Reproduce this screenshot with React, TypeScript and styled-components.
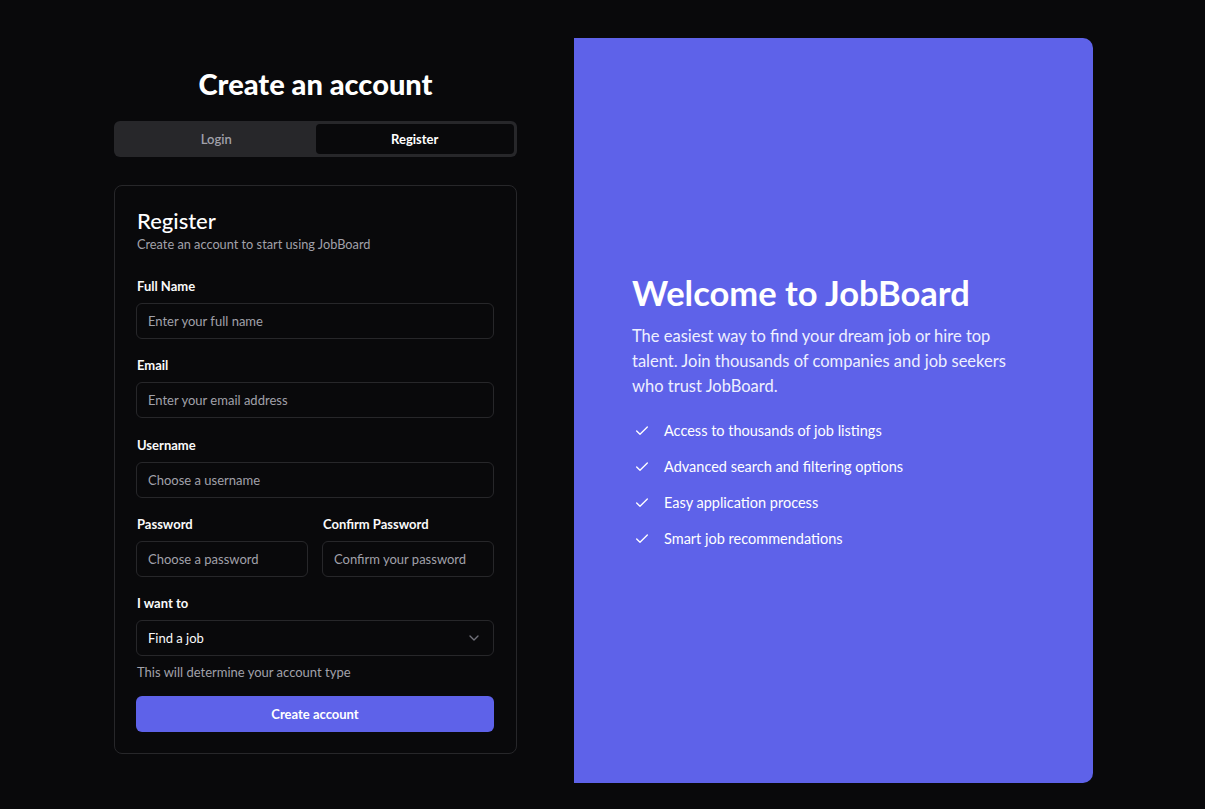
import React from "react";
import styled, { createGlobalStyle } from "styled-components";
import { Check, ChevronDown } from "lucide-react";

const Global = createGlobalStyle`
  html, body { margin: 0; padding: 0; background: #09090b; }
  body { font-family: "Segoe UI", Lato, "Noto Sans", sans-serif; color: #fafafa; }
  * { box-sizing: border-box; }
`;

const Page = styled.div`
  width: 1205px;
  height: 809px;
  background: #09090b;
  display: flex;
  justify-content: center;
  align-items: stretch;
  padding: 38px 0 26px 2px;
  gap: 57px;
`;

const LeftCol = styled.div`
  width: 403px;
  display: flex;
  flex-direction: column;
  padding-top: 29px;
`;

const Title = styled.h1`
  margin: 0;
  text-align: center;
  font-size: 29px;
  line-height: 34px;
  font-weight: 900;
  color: #ffffff;
`;

const Tabs = styled.div`
  margin-top: 20px;
  height: 36px;
  background: #27272a;
  border-radius: 6px;
  padding: 3px;
  display: grid;
  grid-template-columns: 1fr 1fr;
`;

const Tab = styled.div<{ $active?: boolean }>`
  display: flex;
  align-items: center;
  justify-content: center;
  border-radius: 4px;
  font-size: 13px;
  font-weight: ${(p) => (p.$active ? 700 : 600)};
  color: ${(p) => (p.$active ? "#ffffff" : "#a1a1aa")};
  background: ${(p) => (p.$active ? "#09090b" : "transparent")};
`;

const Card = styled.div`
  margin-top: 28px;
  border: 1px solid #27272a;
  border-radius: 8px;
  padding: 22px 22px 21px 21px;
  display: flex;
  flex-direction: column;
`;

const CardTitle = styled.h2`
  margin: 0 0 0 1px;
  font-size: 22px;
  line-height: 26px;
  font-weight: 500;
  color: #ffffff;
`;

const CardSub = styled.p`
  margin: 0 0 0 1px;
  font-size: 12.75px;
  line-height: 20px;
  color: #a1a1aa;
`;

const Form = styled.div`
  margin-top: 22px;
  display: flex;
  flex-direction: column;
  gap: 16.25px;
`;

const Row = styled.div`
  display: grid;
  grid-template-columns: 1fr 1fr;
  gap: 14px;
`;

const Field = styled.div`
  display: flex;
  flex-direction: column;
  gap: 7px;
`;

const Label = styled.label`
  padding-left: 1px;
  font-size: 13px;
  line-height: 20px;
  font-weight: 700;
  color: #fafafa;
`;

const Input = styled.div`
  height: 36px;
  border: 1px solid #27272a;
  border-radius: 6px;
  padding: 0 11px;
  display: flex;
  align-items: center;
  font-size: 13px;
  color: #a1a1aa;
`;

const Select = styled(Input)`
  justify-content: space-between;
  color: #fafafa;
  & svg { color: #71717a; }
`;

const Helper = styled.p`
  margin: 6px 0 0 1px;
  font-size: 13px;
  line-height: 20px;
  color: #a1a1aa;
`;

const Button = styled.button`
  margin-top: 14px;
  height: 36px;
  border: none;
  border-radius: 6px;
  background: #5e62e9;
  color: #ffffff;
  font-family: inherit;
  font-size: 13px;
  font-weight: 700;
`;

const Panel = styled.div`
  width: 519px;
  background: #5e62e9;
  border-radius: 0 10px 10px 0;
  padding: 0 58px;
  display: flex;
  flex-direction: column;
  justify-content: center;
`;

const Welcome = styled.h2`
  margin: 0;
  font-size: 34.5px;
  line-height: 40px;
  font-weight: 700;
  color: #ffffff;
`;

const Lead = styled.p`
  margin: 11px 0 0;
  max-width: 385px;
  font-size: 16.5px;
  line-height: 25px;
  color: #eef0ff;
`;

const List = styled.ul`
  list-style: none;
  margin: 22px 0 0;
  padding: 0;
  display: flex;
  flex-direction: column;
  gap: 16px;
`;

const Item = styled.li`
  display: flex;
  align-items: center;
  gap: 14px;
  font-size: 14.5px;
  line-height: 20px;
  color: #ffffff;
  & svg { margin-left: 2px; flex-shrink: 0; }
`;

const features = [
  "Access to thousands of job listings",
  "Advanced search and filtering options",
  "Easy application process",
  "Smart job recommendations",
];

export default function App() {
  return (
    <>
      <Global />
      <Page>
        <LeftCol>
          <Title>Create an account</Title>
          <Tabs>
            <Tab>Login</Tab>
            <Tab $active>Register</Tab>
          </Tabs>
          <Card>
            <CardTitle>Register</CardTitle>
            <CardSub>Create an account to start using JobBoard</CardSub>
            <Form>
              <Field>
                <Label>Full Name</Label>
                <Input>Enter your full name</Input>
              </Field>
              <Field>
                <Label>Email</Label>
                <Input>Enter your email address</Input>
              </Field>
              <Field>
                <Label>Username</Label>
                <Input>Choose a username</Input>
              </Field>
              <Row>
                <Field>
                  <Label>Password</Label>
                  <Input>Choose a password</Input>
                </Field>
                <Field>
                  <Label>Confirm Password</Label>
                  <Input>Confirm your password</Input>
                </Field>
              </Row>
              <Field>
                <Label>I want to</Label>
                <Select>
                  Find a job
                  <ChevronDown size={16} strokeWidth={2} />
                </Select>
              </Field>
            </Form>
            <Helper>This will determine your account type</Helper>
            <Button>Create account</Button>
          </Card>
        </LeftCol>
        <Panel>
          <Welcome>Welcome to JobBoard</Welcome>
          <Lead>
            The easiest way to find your dream job or hire top talent. Join
            thousands of companies and job seekers who trust JobBoard.
          </Lead>
          <List>
            {features.map((f) => (
              <Item key={f}>
                <Check size={16} strokeWidth={2} />
                {f}
              </Item>
            ))}
          </List>
        </Panel>
      </Page>
    </>
  );
}
